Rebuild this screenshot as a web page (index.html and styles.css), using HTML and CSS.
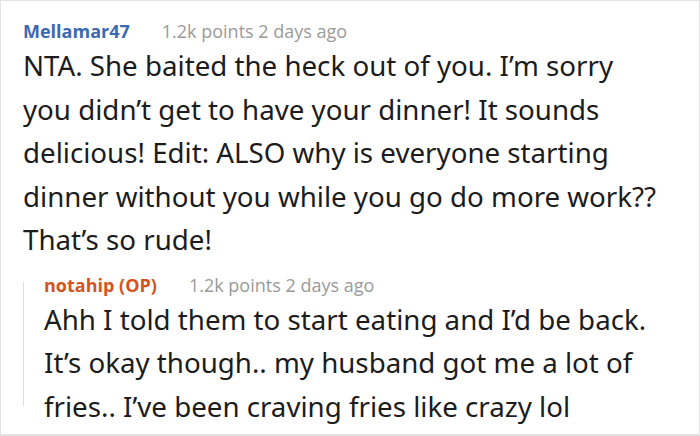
FILE: index.html
```html
<!DOCTYPE html>
<html>
<head>
<meta charset="utf-8">
<link rel="stylesheet" href="styles.css">
</head>
<body>
<div class="card">
  <div class="comment">
    <div class="meta"><span class="author">Mellamar47</span><span class="info">1.2k points 2 days ago</span></div>
    <div class="text">NTA. She baited the heck out of you. I’m sorry<br>you didn’t get to have your dinner! It sounds<br>delicious! Edit: ALSO why is everyone starting<br>dinner without you while you go do more work??<br>That’s so rude!</div>
  </div>
  <div class="reply">
    <div class="meta"><span class="author op">notahip (OP)</span><span class="info">1.2k points 2 days ago</span></div>
    <div class="text">Ahh I told them to start eating and I’d be back.<br>It’s okay though.. my husband got me a lot of<br>fries.. I’ve been craving fries like crazy lol</div>
  </div>
</div>
</body>
</html>
```
FILE: styles.css
```css
html, body { margin: 0; padding: 0; background: #fff; }
.card {
  width: 700px; height: 436px; box-sizing: border-box;
  border: 1px solid #e3e3e3; border-bottom-width: 2px;
  padding: 17px 10px 0 22px;
  font-family: "Noto Sans", "Open Sans", sans-serif;
  color: #1c1c1c;
}
.meta { display: flex; gap: 32px; font-size: 18px; line-height: 26px; }
.author { font-weight: 700; color: #3b69b4; font-family: "Open Sans", sans-serif; }
.author.op { color: #d4531f; }
.info { color: #9a9a9a; font-family: "Open Sans", sans-serif; }
.text { font-size: 27.7px; line-height: 43.5px; margin-top: 0; white-space: nowrap; }
.reply { position: relative; margin-top: 10px; padding-left: 21px; }
.reply::before {
  content: ""; position: absolute; left: 0; top: 10px; bottom: 22px;
  border-left: 1px solid #dedede;
}
```
